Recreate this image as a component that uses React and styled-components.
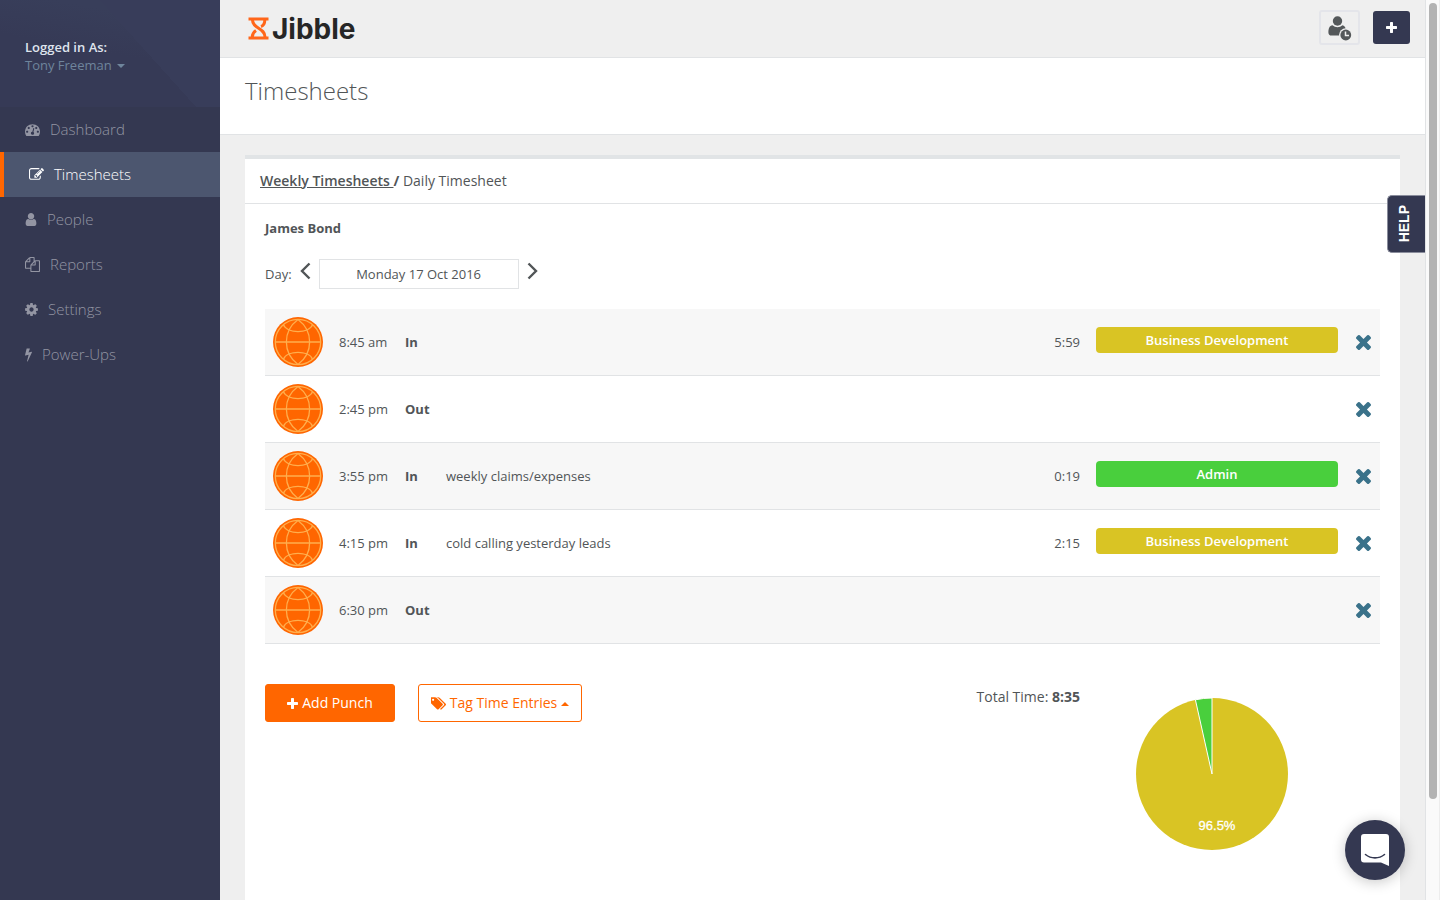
import React from "react";
import styled, { createGlobalStyle } from "styled-components";

const navy = "#343851";
const orange = "#ff6600";
const line = "#e1e3e5";
const yellow = "#d9c424";
const green = "#49cf3d";

const GlobalStyle = createGlobalStyle`
  * {
    box-sizing: border-box;
  }
  body {
    margin: 0;
    background: #efefef;
    color: #515557;
    font-family: "Open Sans", sans-serif;
    font-size: 13px;
    line-height: 18px;
  }
  button, input {
    font: inherit;
    color: inherit;
  }
  button {
    padding: 0;
    border: 0;
    background: none;
    cursor: pointer;
  }
`;

const Page = styled.div`
  display: flex;
  height: 100vh;
  overflow: hidden;
`;

const Sidebar = styled.aside`
  flex: 0 0 220px;
  background: ${navy};
`;

const Profile = styled.div`
  height: 107px;
  padding: 38px 25px;
  color: #dfe4ed;
  background: linear-gradient(48deg, transparent 62%, #383d5a 62%),
    linear-gradient(190deg, #383e5a 20%, #363a56 50%);
`;

const ProfileLabel = styled.div`
  font-weight: 600;
`;

const ProfileName = styled.button`
  display: flex;
  align-items: center;
  gap: 5px;
  color: #6f859c;
`;

const Caret = styled.span`
  margin-top: 2px;
  border: 4px solid transparent;
  border-top-width: ${(p) => (p.$up ? "0" : "4px")};
  border-top-color: currentColor;
  border-bottom-width: ${(p) => (p.$up ? "4px" : "0")};
  border-bottom-color: currentColor;
`;

const NavLink = styled.a`
  display: flex;
  align-items: center;
  gap: 10px;
  height: 45px;
  padding: 0 25px 2px;
  border-left: ${(p) => (p.$active ? `4px solid ${orange}` : "0")};
  background: ${(p) => (p.$active ? "#4c566f" : "transparent")};
  color: ${(p) => (p.$active ? "#ffffff" : "#9395a3")};
  font-size: 15px;
  font-weight: 300;
  text-decoration: none;
  svg {
    margin-top: 2px;
  }
`;

const Main = styled.main`
  position: relative;
  display: flex;
  flex-direction: column;
  flex: 1;
  min-width: 0;
`;

const Topbar = styled.header`
  display: flex;
  align-items: center;
  gap: 13px;
  flex: 0 0 58px;
  padding: 0 15px 2px 28px;
  border-bottom: 1px solid ${line};
`;

const Logo = styled.a`
  display: flex;
  align-items: center;
  gap: 3px;
  margin-right: auto;
  padding-top: 2px;
  color: #262626;
  font-family: Inter, sans-serif;
  font-size: 28px;
  font-weight: 700;
  line-height: 32px;
  text-decoration: none;
`;

const PunchStatus = styled.button`
  display: flex;
  align-items: center;
  justify-content: center;
  width: 41px;
  height: 35px;
  border: 2px solid #e4e5ea;
  border-radius: 3px;
`;

const AddButton = styled.button`
  display: flex;
  align-items: center;
  justify-content: center;
  width: 37px;
  height: 33px;
  border-radius: 3px;
  background: ${navy};
  color: #fff;
`;

const TitleBar = styled.div`
  flex: 0 0 77px;
  padding: 17px 25px;
  border-bottom: 1px solid ${line};
  background: #fff;
`;

const Title = styled.h1`
  margin: 0;
  font-size: 24px;
  font-weight: 300;
  line-height: 32px;
`;

const Card = styled.section`
  flex: 1;
  margin: 20px 25px 0;
  border-top: 4px solid #e1e4e6;
  background: #fff;
`;

const Breadcrumb = styled.nav`
  height: 45px;
  padding: 13px 15px;
  border-bottom: 1px solid ${line};
  font-size: 14px;
  a {
    color: inherit;
    font-weight: 600;
    white-space: pre;
  }
`;

const CardBody = styled.div`
  padding: 15px 20px;
`;

const Person = styled.h2`
  margin: 0 0 22px;
  font-size: 13px;
  line-height: 18px;
`;

const DayRow = styled.div`
  display: flex;
  align-items: center;
  gap: 8px;
  height: 30px;
  margin-bottom: 20px;
`;

const DayInput = styled.input`
  width: 200px;
  height: 30px;
  border: 1px solid ${line};
  background: #fff;
  text-align: center;
`;

const ArrowButton = styled.button`
  display: flex;
  padding-bottom: 6px;
`;

const Table = styled.table`
  width: 100%;
  border-spacing: 0;
  table-layout: fixed;
`;

const Row = styled.tr`
  height: 67px;
  &:nth-child(odd) {
    background: #f7f7f7;
  }
`;

const Cell = styled.td`
  width: ${(p) => p.$width || "auto"};
  padding: 0 8px;
  border-bottom: 1px solid ${line};
  text-align: ${(p) => p.$align || "left"};
  font-weight: ${(p) => (p.$bold ? 700 : 400)};
  svg {
    display: block;
  }
`;

const Tag = styled.div`
  height: 26px;
  margin-bottom: 4px;
  border-radius: 4px;
  background: ${(p) => p.$color};
  color: #fff;
  font-weight: 600;
  line-height: 26px;
  text-align: center;
`;

const RemoveButton = styled.button`
  display: block;
  margin: 0 auto;
  color: #3a728a;
`;

const Footer = styled.div`
  display: flex;
  align-items: flex-start;
  padding-top: 40px;
`;

const Button = styled.button`
  display: flex;
  align-items: center;
  justify-content: center;
  gap: 4px;
  width: ${(p) => (p.$outline ? "164px" : "130px")};
  height: 38px;
  margin-right: 23px;
  border: 1px solid ${orange};
  border-radius: 3px;
  background: ${(p) => (p.$outline ? "#fff" : orange)};
  color: ${(p) => (p.$outline ? orange : "#fff")};
  font-size: 14px;
`;

const Total = styled.div`
  margin-left: auto;
  padding-top: 4px;
  font-size: 14px;
`;

const Chart = styled.div`
  display: flex;
  justify-content: center;
  width: 300px;
  padding: 13px 36px 0 0;
`;

const HelpTab = styled.button`
  position: absolute;
  top: 195px;
  right: 0;
  width: 38px;
  height: 58px;
  padding-right: 5px;
  border: 1px solid #8a8d9c;
  border-right: 0;
  border-radius: 5px 0 0 5px;
  background: ${navy};
  color: #fff;
  font-family: "Liberation Sans", sans-serif;
  font-size: 14px;
  font-weight: 700;
  span {
    display: block;
    margin: 0 auto;
    writing-mode: vertical-rl;
    transform: rotate(180deg);
  }
`;

const ChatButton = styled.button`
  position: absolute;
  right: 20px;
  bottom: 20px;
  display: flex;
  align-items: center;
  justify-content: center;
  width: 60px;
  height: 60px;
  border-radius: 50%;
  background: ${navy};
  box-shadow: 0 2px 14px rgba(0, 0, 0, 0.22);
`;

const ScrollTrack = styled.div`
  flex: 0 0 15px;
  padding: 3px 0 3px 3px;
  border-left: 1px solid ${line};
  border-right: 1px solid #ededed;
  background: #fafafa;
`;

const ScrollThumb = styled.div`
  width: 8px;
  height: 89%;
  border-radius: 4px;
  background: #b3b3b3;
`;

const icons = {
  dashboard: {
    box: "0 0 1792 1792",
    d: "M384 1152q0-53-37.5-90.5t-90.5-37.5-90.5 37.5-37.5 90.5 37.5 90.5 90.5 37.5 90.5-37.5 37.5-90.5zm192-448q0-53-37.5-90.5t-90.5-37.5-90.5 37.5-37.5 90.5 37.5 90.5 90.5 37.5 90.5-37.5 37.5-90.5zm428 481l101-382q6-26-7.5-48.5t-38.5-29.5-48 6.5-30 39.5l-101 382q-60 5-107 43.5t-63 98.5q-20 77 20 146t117 89 146-20 89-117q16-60-6-117t-72-91zm660-33q0-53-37.5-90.5t-90.5-37.5-90.5 37.5-37.5 90.5 37.5 90.5 90.5 37.5 90.5-37.5 37.5-90.5zm-640-640q0-53-37.5-90.5t-90.5-37.5-90.5 37.5-37.5 90.5 37.5 90.5 90.5 37.5 90.5-37.5 37.5-90.5zm448 192q0-53-37.5-90.5t-90.5-37.5-90.5 37.5-37.5 90.5 37.5 90.5 90.5 37.5 90.5-37.5 37.5-90.5zm320 448q0 261-141 483-19 29-54 29h-1402q-35 0-54-29-141-221-141-483 0-182 71-348t191-286 286-191 348-71 348 71 286 191 191 286 71 348z",
  },
  edit: {
    box: "0 0 1792 1792",
    d: "M888 1184l116-116-152-152-116 116v56h96v96h56zm440-720q-16-16-33 1l-350 350q-17 17-1 33t33-1l350-350q17-17 1-33zm80 594v190q0 119-84.5 203.5t-203.5 84.5h-832q-119 0-203.5-84.5t-84.5-203.5v-832q0-119 84.5-203.5t203.5-84.5h832q63 0 117 25 15 7 18 23 3 17-9 29l-49 49q-14 14-32 8-23-6-45-6h-832q-66 0-113 47t-47 113v832q0 66 47 113t113 47h832q66 0 113-47t47-113v-126q0-13 9-22l64-64q15-15 35-7t20 29zm-96-738l288 288-672 672h-288v-288zm444 132l-92 92-288-288 92-92q28-28 68-28t68 28l152 152q28 28 28 68t-28 68z",
  },
  user: {
    box: "256 0 1280 1792",
    d: "M1536 1399q0 109-62.5 187t-150.5 78h-854q-88 0-150.5-78t-62.5-187q0-85 8.5-160.5t31.5-152 58.5-131 94-89 134.5-34.5q131 128 313 128t313-128q76 0 134.5 34.5t94 89 58.5 131 31.5 152 8.5 160.5zm-256-887q0 159-112.5 271.5t-271.5 112.5-271.5-112.5-112.5-271.5 112.5-271.5 271.5-112.5 271.5 112.5 112.5 271.5z",
  },
  files: {
    box: "0 0 1792 1792",
    d: "M1696 384q40 0 68 28t28 68v1216q0 40-28 68t-68 28h-960q-40 0-68-28t-28-68v-288h-544q-40 0-68-28t-28-68v-672q0-40 20-88t48-76l408-408q28-28 76-48t88-20h416q40 0 68 28t28 68v328q68-40 128-40h416zm-544 213l-299 299h299v-299zm-640-384l-299 299h299v-299zm196 647l316-316v-416h-384v416q0 40-28 68t-68 28h-416v640h512v-256q0-40 20-88t48-76zm956 804v-1152h-384v416q0 40-28 68t-68 28h-416v640h896z",
  },
  cog: {
    box: "128 0 1536 1792",
    d: "M1152 896q0-106-75-181t-181-75-181 75-75 181 75 181 181 75 181-75 75-181zm512-109v222q0 12-8 23t-20 13l-185 28q-19 54-39 91 35 50 107 138 10 12 10 25t-9 23q-27 37-99 108t-94 71q-12 0-26-9l-138-108q-44 23-91 38-16 136-29 186-7 28-36 28h-222q-14 0-24.5-8.5t-11.5-21.5l-28-184q-49-16-90-37l-141 107q-10 9-25 9-14 0-25-11-126-114-165-168-7-10-7-23 0-12 8-23 15-21 51-66.5t54-70.5q-27-50-41-99l-183-27q-13-2-21-12.5t-8-23.5v-222q0-12 8-23t19-13l186-28q14-46 39-92-40-57-107-138-10-12-10-24 0-10 9-23 26-36 98.5-107.5t94.5-71.5q13 0 26 10l138 107q44-23 91-38 16-136 29-186 7-28 36-28h222q14 0 24.5 8.5t11.5 21.5l28 184q49 16 90 37l142-107q9-9 24-9 13 0 25 10 129 119 165 170 7 8 7 22 0 12-8 23-15 21-51 66.5t-54 70.5q26 50 41 98l183 28q13 2 21 12.5t8 23.5z",
  },
  bolt: {
    box: "448 0 896 1792",
    d: "M1333 566q18 20 7 44l-540 1157q-13 25-42 25-4 0-14-2-17-5-25.5-19t-4.5-30l197-808-406 101q-4 1-12 1-18 0-31-11-18-15-13-39l201-825q4-14 16-23t28-9h328q19 0 32 12.5t13 29.5q0 8-5 18l-171 463 396-98q8-2 12-2 19 0 34 15z",
  },
  plus: {
    box: "192 128 1408 1408",
    d: "M1600 736v192q0 40-28 68t-68 28h-416v416q0 40-28 68t-68 28h-192q-40 0-68-28t-28-68v-416h-416q-40 0-68-28t-28-68v-192q0-40 28-68t68-28h416v-416q0-40 28-68t68-28h192q40 0 68 28t28 68v416h416q40 0 68 28t28 68z",
  },
  times: {
    box: "302 366 1188 1188",
    d: "M1490 1322q0 40-28 68l-136 136q-28 28-68 28t-68-28l-294-294-294 294q-28 28-68 28t-68-28l-136-136q-28-28-28-68t28-68l294-294-294-294q-28-28-28-68t28-68l136-136q28-28 68-28t68 28l294 294 294-294q28-28 68-28t68 28l136 136q28 28 28 68t-28 68l-294 294 294 294q28 28 28 68z",
  },
  tags: {
    box: "0 0 1835 1792",
    d: "M384 448q0-53-37.5-90.5t-90.5-37.5-90.5 37.5-37.5 90.5 37.5 90.5 90.5 37.5 90.5-37.5 37.5-90.5zm1067 576q0 53-37 90l-491 492q-39 37-91 37-53 0-90-37l-715-716q-38-37-64.5-101t-26.5-117v-416q0-52 38-90t90-38h416q53 0 117 26.5t102 64.5l715 714q37 39 37 91zm384 0q0 53-37 90l-491 492q-39 37-91 37-36 0-59-14t-53-45l470-470q37-37 37-90 0-52-37-91l-715-714q-38-38-102-64.5t-117-26.5h224q53 0 117 26.5t102 64.5l715 714q37 39 37 91z",
  },
};

const Icon = ({ name, width, height = width }) => (
  <svg
    width={width}
    height={height}
    viewBox={icons[name].box}
    fill="currentColor"
    aria-hidden="true"
  >
    <path d={icons[name].d} />
  </svg>
);

const Arrow = ({ d }) => (
  <svg width="11" height="18" viewBox="0 0 11 18" fill="none" aria-hidden="true">
    <path d={d} stroke="#515557" strokeWidth="2.4" />
  </svg>
);

const Hourglass = () => (
  <svg width="21" height="23" viewBox="0 0 21 23" fill="none" aria-hidden="true">
    <g stroke="#ff661a" strokeWidth="3">
      <path d="M0.5 2H20.5M0.5 21H20.5" />
      <path d="M4.5 3C4.5 12 17 10.5 17 20M16.800 3C16.800 6.5 16 8.500 13 9.500M4.300 20C4.300 17 5 15.500 8 13.500" />
    </g>
  </svg>
);

const UserClock = () => (
  <svg width="24" height="26" viewBox="0 0 24 26" aria-hidden="true">
    <g fill="#54585a">
      <circle cx="9.5" cy="6" r="4.7" />
      <path d="M4.5 10.3C6 11.6 7.6 12.2 9.5 12.2S13 11.6 14.5 10.3C16.3 10.6 17.3 12 17.7 14V20.5H3.500C1.500 20.5 .4 19.3 .4 17.4 .4 13.5 1.500 10.5 4.5 10.3Z" />
    </g>
    <circle cx="17.8" cy="20" r="6.8" fill="#efefef" />
    <circle cx="17.8" cy="20" r="5.4" fill="#54585a" />
    <path d="M17.5 16.5V20.5H21" fill="none" stroke="#efefef" strokeWidth="1.5" />
  </svg>
);

const Globe = () => (
  <svg width="50" height="50" viewBox="0 0 50 50" aria-hidden="true">
    <circle cx="25" cy="25" r="25" fill={orange} />
    <g fill="none" stroke="#ffae4d" strokeWidth="1.3">
      <circle cx="25" cy="25" r="22.7" />
      <path d="M2 25H48M25 2.5C9.500 14 9.500 36 25 47.5M25 2.5C40.5 14 40.5 36 25 47.5M10.5 7.8C14 16.8 36 16.8 39.5 7.8M10.5 42.2C14 33.2 36 33.2 39.5 42.2" />
    </g>
  </svg>
);

const Pie = () => (
  <svg width="154" height="154" viewBox="0 0 154 154" role="img" aria-label="96.5%">
    <circle cx="77" cy="77" r="76" fill={yellow} />
    <path
      d="M77 77L60.4 2.8A76 76 0 0 1 77 1Z"
      fill={green}
      stroke="#fff"
      strokeWidth="1"
    />
    <text
      x="82"
      y="133"
      fill="#fff"
      stroke="#fff"
      strokeWidth="0.3"
      fontFamily="Liberation Sans, sans-serif"
      fontSize="13"
      textAnchor="middle"
    >
      96.5%
    </text>
  </svg>
);

const links = [
  { label: "Dashboard", icon: "dashboard", width: 15 },
  { label: "Timesheets", icon: "edit", width: 15, active: true },
  { label: "People", icon: "user", width: 12 },
  { label: "Reports", icon: "files", width: 15 },
  { label: "Settings", icon: "cog", width: 13 },
  { label: "Power-Ups", icon: "bolt", width: 7 },
];

const entries = [
  { time: "8:45 am", type: "In", hours: "5:59", tag: "Business Development" },
  { time: "2:45 pm", type: "Out" },
  { time: "3:55 pm", type: "In", note: "weekly claims/expenses", hours: "0:19", tag: "Admin" },
  { time: "4:15 pm", type: "In", note: "cold calling yesterday leads", hours: "2:15", tag: "Business Development" },
  { time: "6:30 pm", type: "Out" },
];

const tagColors = { "Business Development": yellow, Admin: green };

export default function App() {
  return (
    <Page>
      <GlobalStyle />
      <Sidebar>
        <Profile>
          <ProfileLabel>Logged in As:</ProfileLabel>
          <ProfileName>
            Tony Freeman <Caret />
          </ProfileName>
        </Profile>
        <nav>
          {links.map((link) => (
            <NavLink href="#" key={link.label} $active={link.active}>
              <Icon name={link.icon} width={link.width} height={15} />
              {link.label}
            </NavLink>
          ))}
        </nav>
      </Sidebar>

      <Main>
        <Topbar>
          <Logo href="#">
            <Hourglass />
            Jibble
          </Logo>
          <PunchStatus aria-label="Punch status">
            <UserClock />
          </PunchStatus>
          <AddButton aria-label="Add">
            <Icon name="plus" width={11} />
          </AddButton>
        </Topbar>

        <TitleBar>
          <Title>Timesheets</Title>
        </TitleBar>

        <Card>
          <Breadcrumb>
            <a href="#">{"Weekly Timesheets "}</a>
            <b>/</b> Daily Timesheet
          </Breadcrumb>
          <CardBody>
            <Person>James Bond</Person>
            <DayRow>
              <label htmlFor="day">Day:</label>
              <ArrowButton aria-label="Previous day">
                <Arrow d="M9.5 1.5L2 9L9.5 16.5" />
              </ArrowButton>
              <DayInput id="day" defaultValue="Monday 17 Oct 2016" />
              <ArrowButton aria-label="Next day">
                <Arrow d="M1.5 1.5L9 9L1.5 16.5" />
              </ArrowButton>
            </DayRow>

            <Table>
              <tbody>
                {entries.map((entry) => (
                  <Row key={entry.time}>
                    <Cell $width="66px">
                      <Globe />
                    </Cell>
                    <Cell $width="66px">{entry.time}</Cell>
                    <Cell $width="41px" $bold>
                      {entry.type}
                    </Cell>
                    <Cell>{entry.note}</Cell>
                    <Cell $width="60px" $align="right">
                      {entry.hours}
                    </Cell>
                    <Cell $width="258px">
                      {entry.tag && (
                        <Tag $color={tagColors[entry.tag]}>{entry.tag}</Tag>
                      )}
                    </Cell>
                    <Cell $width="34px">
                      <RemoveButton aria-label="Remove entry">
                        <Icon name="times" width={15} />
                      </RemoveButton>
                    </Cell>
                  </Row>
                ))}
              </tbody>
            </Table>

            <Footer>
              <Button>
                <Icon name="plus" width={11} />
                Add Punch
              </Button>
              <Button $outline>
                <Icon name="tags" width={15} />
                Tag Time Entries <Caret $up />
              </Button>
              <Total>
                Total Time: <b>8:35</b>
              </Total>
              <Chart>
                <Pie />
              </Chart>
            </Footer>
          </CardBody>
        </Card>

        <HelpTab>
          <span>HELP</span>
        </HelpTab>
        <ChatButton aria-label="Open chat">
          <svg width="28" height="32" viewBox="0 0 28 32" aria-hidden="true">
            <path
              d="M3 0H25C27 0 28 1 28 3V32L20 28.5H3C1 28.5 0 27.5 0 25.5V3C0 1 1 0 3 0Z"
              fill="#fff"
            />
            <path
              d="M4.5 20.5C10 25 18 25 23.5 20.5"
              fill="none"
              stroke={navy}
              strokeWidth="1.6"
              strokeLinecap="round"
            />
          </svg>
        </ChatButton>
      </Main>

      <ScrollTrack>
        <ScrollThumb />
      </ScrollTrack>
    </Page>
  );
}
